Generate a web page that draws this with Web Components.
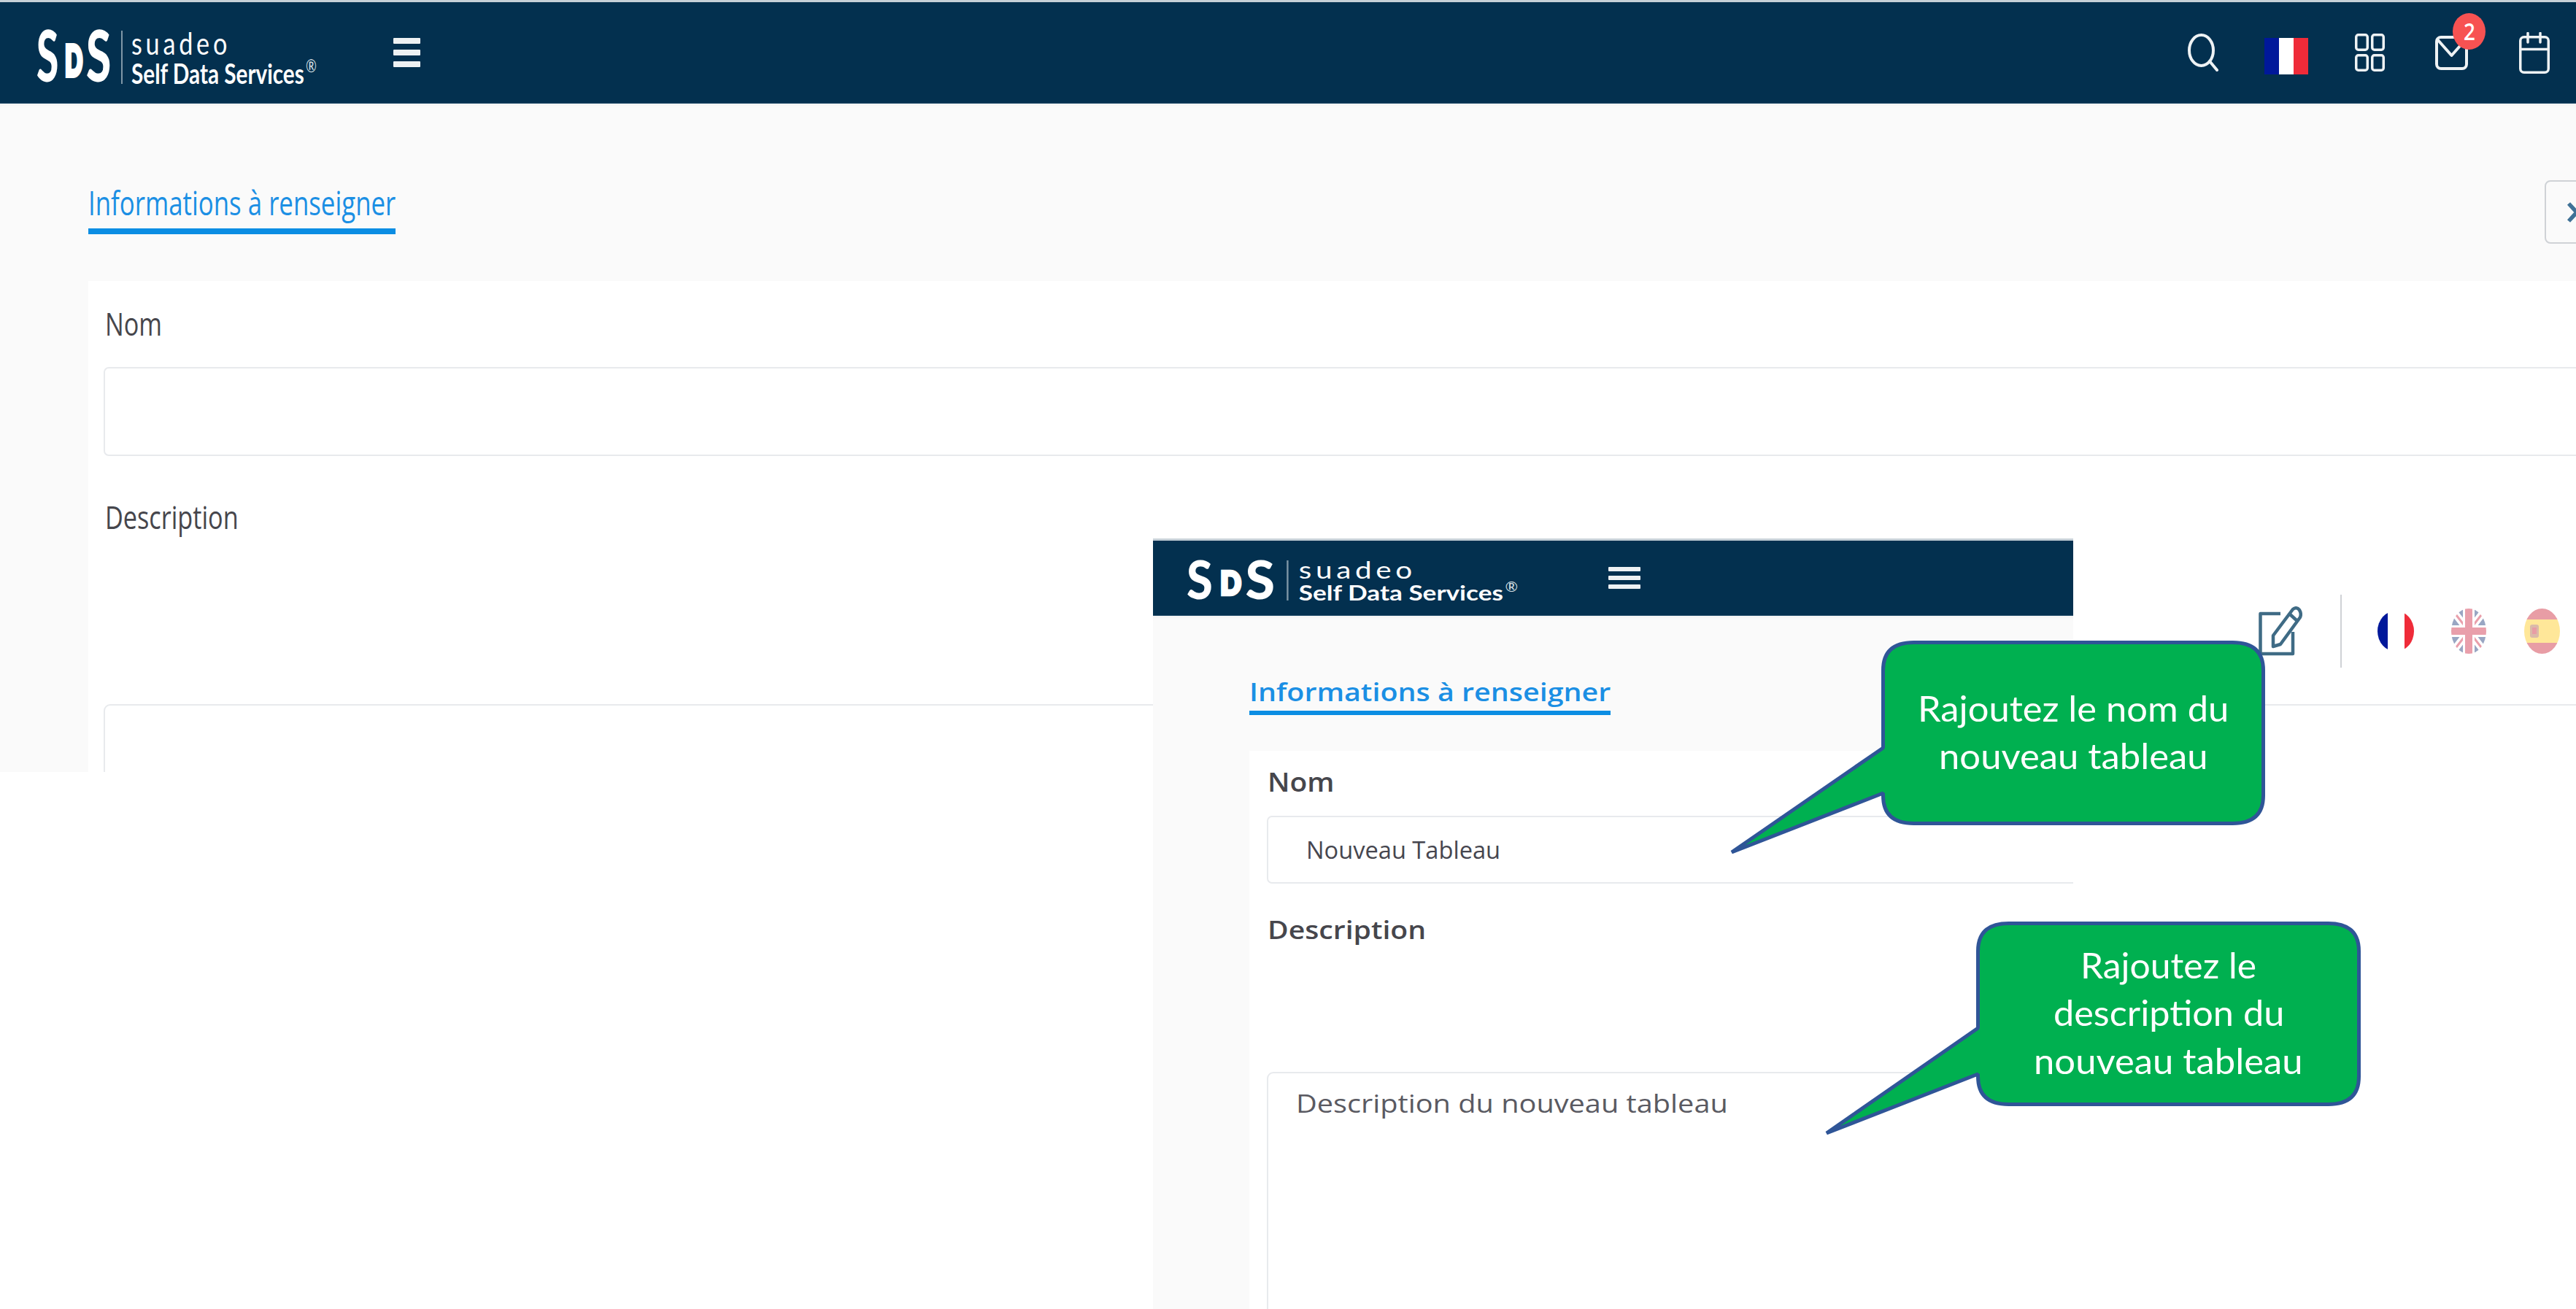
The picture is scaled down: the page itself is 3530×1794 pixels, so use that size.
<!DOCTYPE html>
<html lang="fr">
<head>
<meta charset="utf-8">
<title>SDS</title>
<style>
html,body{margin:0;padding:0;background:#fff}
body{width:3530px;height:1794px;overflow:hidden;position:relative;font-family:"Open Sans","Liberation Sans",sans-serif}
.base{width:3530px;height:1058px;--main-pl:121px;
  --title-fs:45px;--title-w:400;--title-pb:13px;--title-bar:8px;
  --label-fs:43px;--label-w:400;--label-ml:2px;
  --field-ml:21px;--card-pt:37px;--text-fs:32px}
.over{position:absolute;left:1580px;top:738px;width:1261px;height:1056px;--main-pl:132px;
  --title-fs:34px;--title-w:600;--title-pb:9px;--title-bar:6px;
  --label-fs:36px;--label-w:600;--label-ml:1px;
  --field-ml:24px;--card-pt:25px;--text-fs:32px}
.base sds-header{height:142px;padding:0 36px 0 50px}
.over sds-header{height:106px;padding:0 0 0 46px}
.base sds-logo{margin-top:12px}
.over sds-logo{margin-top:6px}
.base sds-burger{margin-left:102px;width:37px;--bar:8.5px;--gap:7.5px}
.over sds-burger{margin-left:120px;width:44px;--bar:6px;--gap:6px}
.acts{margin-left:auto;display:flex;align-items:center}
.base sds-head{padding-top:105px;height:87px}
.over sds-head{padding-top:87px;height:49px}
.base sds-title{margin-top:8px}
.base sds-card{margin-top:51px}
.over sds-card{margin-top:49px}
.base sds-input{margin-top:38px;height:122px}
.over sds-input{margin-top:28px;height:93px}
.base .desc{margin-top:62px}
.over .desc{margin-top:45px;--label-fs:35px}
.base sds-toolbar{margin-top:85px}
.base sds-textarea{margin-top:50px;height:400px}
.over sds-textarea{margin-top:178px;height:600px;font-size:35px;padding-top:23px;padding-left:38px}
</style>
</head>
<body>
<sds-window class="base">
  <sds-header slot="header">
    <sds-logo sx="1" sy="1"></sds-logo>
    <sds-burger></sds-burger>
    <div class="acts" slot="actions">
      <sds-icon name="search"></sds-icon>
      <sds-icon name="flag" style="margin:9px 0 0 63px"></sds-icon>
      <sds-icon name="grid" style="margin-left:64px"></sds-icon>
      <sds-icon name="mail" style="margin-left:69px"><sds-badge>2</sds-badge></sds-icon>
      <sds-icon name="calendar" style="margin-left:70px"></sds-icon>
    </div>
  </sds-header>
  <sds-head>
    <sds-title><fit-text w="421">Informations à renseigner</fit-text></sds-title>
    <sds-close></sds-close>
  </sds-head>
  <sds-card>
    <sds-label><fit-text w="78">Nom</fit-text></sds-label>
    <sds-input></sds-input>
    <sds-label class="desc"><fit-text w="183">Description</fit-text></sds-label>
    <sds-toolbar>
      <sds-icon name="edit"></sds-icon>
      <sds-icon name="vr" style="margin-left:52px"></sds-icon>
      <sds-icon name="fr" style="margin-left:49px"></sds-icon>
      <sds-icon name="uk" style="margin-left:51px"></sds-icon>
      <sds-icon name="es" style="margin-left:52px"></sds-icon>
    </sds-toolbar>
    <sds-textarea></sds-textarea>
  </sds-card>
</sds-window>

<sds-window class="over">
  <sds-header slot="header">
    <sds-logo sx="1.183" sy="0.753"></sds-logo>
    <sds-burger></sds-burger>
  </sds-header>
  <sds-head>
    <sds-title><fit-text w="495">Informations à renseigner</fit-text></sds-title>
  </sds-head>
  <sds-card>
    <sds-label><fit-text w="92">Nom</fit-text></sds-label>
    <sds-input><fit-text w="266">Nouveau Tableau</fit-text></sds-input>
    <sds-label class="desc"><fit-text w="217">Description</fit-text></sds-label>
    <sds-textarea><fit-text w="592">Description du nouveau tableau</fit-text></sds-textarea>
  </sds-card>
</sds-window>

<sds-callout x="2578" y="878" w="526" h="253" ax="2373" ay="1168" t1="1025" t2="1087">
  <fit-text w="426">Rajoutez le nom du</fit-text>
  <fit-text w="369">nouveau tableau</fit-text>
</sds-callout>
<sds-callout x="2708" y="1263" w="527" h="253" ax="2503" ay="1553" t1="1409" t2="1472">
  <fit-text w="241">Rajoutez le</fit-text>
  <fit-text w="316">description du</fit-text>
  <fit-text w="369">nouveau tableau</fit-text>
</sds-callout>

<script>
const def=(name,html,extra)=>{
  customElements.define(name,class extends HTMLElement{
    constructor(){super();this.attachShadow({mode:'open'}).innerHTML=html;}
    connectedCallback(){extra&&extra(this);}
  });
};

def('sds-window',`<style>:host{display:flex;flex-direction:column;overflow:hidden;background:#fff}
  main{flex:1;min-height:0;background:#fafafa;overflow:hidden;padding-left:var(--main-pl);box-shadow:inset 0 6px 6px -5px rgba(0,0,0,.05)}</style>
  <slot name="header"></slot><main><slot></slot></main>`);

def('sds-header',`<style>:host{display:flex;align-items:center;box-sizing:border-box;background:#03304f;border-top:3px solid #c6d0d7;border-bottom:1px solid #1d4a68;flex:none}</style><slot></slot><slot name="actions"></slot>`);

def('sds-logo',`<style>
  :host{display:block;flex:none}
  .box{width:387px;height:73px;display:flex;transform-origin:0 0;color:#fff;font-family:Lato,"Open Sans",sans-serif;line-height:1}
  .mk{font-weight:900;font-size:97px;margin-top:-16px;flex:none}
  .d{font-size:58px;font-weight:900;margin:11px 0 0 9px;-webkit-text-stroke:6px #fff;flex:none}
  .rule{width:2px;height:73px;background:#7f97a7;margin:0 12px 0 14px;flex:none}
  .txt{flex:none}
  .su{font-size:43px;font-weight:400;letter-spacing:6px;margin-top:-5px}
  .row{display:flex;margin-top:1px;align-items:flex-start}
  .self{font-size:38px;font-weight:700}
  .reg{font-size:25px;margin:-4px 0 0 2px;font-weight:400;color:#d9e1e6}
  </style>
  <div class="box">
    <div class="mk"><fit-text w="30">S</fit-text></div>
    <div class="d"><fit-text w="24">D</fit-text></div>
    <div class="mk" style="margin-left:5px"><fit-text w="34">S</fit-text></div>
    <div class="rule"></div>
    <div class="txt">
      <div class="su"><fit-text w="136">suadeo</fit-text></div>
      <div class="row"><div class="self"><fit-text w="237">Self Data Services</fit-text></div><div class="reg"><fit-text w="15">®</fit-text></div></div>
    </div>
  </div>`,el=>{
  const sx=+el.getAttribute('sx'),sy=+el.getAttribute('sy');
  el.style.width=387*sx+'px';el.style.height=73*sy+'px';
  el.shadowRoot.querySelector('.box').style.transform=`scale(${sx},${sy})`;
});

def('sds-burger',`<style>:host{display:flex;flex-direction:column;gap:var(--gap);flex:none}
  i{display:block;height:var(--bar);background:#eef1f3;border-radius:1px}</style><i></i><i></i><i></i>`);

const ICONS={
 search:[42,52,`<g fill="none" stroke="#eef2f4" stroke-width="4" stroke-linecap="round"><ellipse cx="18.5" cy="23" rx="16.5" ry="21"/><path d="M30 38 40 50"/></g>`],
 flag:[60,50,`<rect width="20" height="50" fill="#00189a"/><rect x="20" width="20" height="50" fill="#fff"/><rect x="40" width="20" height="50" fill="#ef2b39"/>`],
 grid:[41,52,`<g fill="none" stroke="#eef2f4" stroke-width="3.5"><rect x="1.75" y="1.75" width="15.5" height="20.5" rx="3"/><rect x="23.75" y="1.75" width="15.5" height="20.5" rx="3"/><rect x="1.75" y="29.75" width="15.5" height="20.5" rx="3"/><rect x="23.75" y="29.75" width="15.5" height="20.5" rx="3"/></g>`],
 mail:[45,47,`<g fill="none" stroke="#eef2f4" stroke-width="4" stroke-linecap="round" stroke-linejoin="round"><rect x="2" y="2" width="41" height="43" rx="6"/><path d="M3 5 22.500 27 42 5"/></g>`],
 calendar:[42,57,`<g fill="none" stroke="#eef2f4" stroke-width="3.500" stroke-linecap="round"><rect x="1.750" y="6.750" width="38.500" height="48.500" rx="5"/><path d="M1.750 23.500H40.250M12 1.500V14M29 1.500V14"/></g>`],
 edit:[60,68,`<g fill="none" stroke="#3f6b85" stroke-width="4.500" stroke-linejoin="round"><path d="M30 10H2.500V65H47V35"/><path d="M20 55V40L47 4Q52 0 56 5 59 10 57 15L30 52Z"/><path d="M42 10 53 20"/></g>`],
 vr:[2,100,`<rect width="2" height="100" fill="#cfd2d6"/>`],
 fr:[50,56,`<defs><clipPath id="c"><ellipse cx="25" cy="28" rx="25" ry="28"/></clipPath></defs><g clip-path="url(#c)"><rect width="14" height="56" fill="#00189a"/><rect x="37" width="13" height="56" fill="#ef2b39"/></g>`],
 uk:[48,62,`<defs><clipPath id="c"><ellipse cx="24" cy="31" rx="24" ry="31"/></clipPath></defs><g clip-path="url(#c)" opacity=".4"><rect width="48" height="62" fill="#012169"/><path d="M0 0 48 62M48 0 0 62" stroke="#fff" stroke-width="10"/><path d="M0 0 48 62M48 0 0 62" stroke="#c8102e" stroke-width="3"/><path d="M24 0V62M0 31H48" stroke="#fff" stroke-width="16"/><path d="M24 0V62M0 31H48" stroke="#c8102e" stroke-width="10"/></g>`],
 es:[49,62,`<defs><clipPath id="c"><ellipse cx="24.500" cy="31" rx="24.500" ry="31"/></clipPath></defs><g clip-path="url(#c)" opacity=".4"><rect width="49" height="62" fill="#c60b1e"/><rect y="15" width="49" height="32" fill="#ffc400"/><rect x="8" y="22" width="12" height="18" rx="3" fill="#a5532a"/><rect x="11" y="26" width="6" height="9" fill="#c60b1e"/></g>`]
};
def('sds-icon',`<style>:host{display:block;position:relative;flex:none}svg{display:block;width:100%;height:100%}</style><div id="s" style="height:100%"></div><slot></slot>`,el=>{
  const [w,h,body]=ICONS[el.getAttribute('name')];
  el.style.width=w+'px';el.style.height=h+'px';
  el.shadowRoot.getElementById('s').innerHTML=`<svg viewBox="0 0 ${w} ${h}">${body}</svg>`;
});

def('sds-badge',`<style>:host{position:absolute;left:24px;top:-31px;width:45px;height:50px;border-radius:50%;background:#f75252;color:#fff;display:flex;align-items:center;justify-content:center;font-family:"Open Sans",sans-serif;font-weight:600;font-size:33px;line-height:1}
  </style><fit-text id="f" w="16"><slot></slot></fit-text>`);

def('sds-head',`<style>:host{display:flex;justify-content:space-between;align-items:flex-start}</style><slot></slot>`);
def('sds-title',`<style>:host{display:block;flex:none;font-size:var(--title-fs);font-weight:var(--title-w);line-height:1;color:#1b8fe4;padding-bottom:var(--title-pb);border-bottom:var(--title-bar) solid #0b8de3}</style><slot></slot>`);
def('sds-close',`<style>:host{display:flex;align-items:center;justify-content:center;flex:none;box-sizing:border-box;width:87px;height:87px;margin-right:-44px;border:2px solid #cfd2d6;border-radius:8px;background:#fafafa}</style>
  <svg width="28" height="28" viewBox="0 0 28 28"><path d="M3 2 25 26M25 2 3 26" stroke="#3f7196" stroke-width="5.500" fill="none"/></svg>`);
def('sds-card',`<style>:host{display:block;background:#fff;padding-top:var(--card-pt);height:2000px}</style><slot></slot>`);
def('sds-label',`<style>:host{display:block;font-size:var(--label-fs);font-weight:var(--label-w);line-height:1;color:#46464c;margin-left:calc(var(--field-ml) + var(--label-ml))}</style><slot></slot>`);
def('sds-input',`<style>:host{display:flex;align-items:center;box-sizing:border-box;margin-left:var(--field-ml);margin-right:-30px;border:2px solid #e8eaed;border-radius:7px;background:#fff;padding-left:52px;font-size:var(--text-fs);line-height:1;color:#46464f}</style><slot></slot>`);
def('sds-textarea',`<style>:host{display:block;box-sizing:border-box;margin-left:var(--field-ml);margin-right:-30px;border:2px solid #e8eaed;border-radius:9px;background:#fff;line-height:1;color:#5a5a62}</style><slot></slot>`);
def('sds-toolbar',`<style>:host{display:flex;justify-content:flex-end;align-items:center;height:100px;padding-right:22px}</style><slot></slot>`);

def('sds-callout',`<style>:host{position:absolute;display:block}
  svg{position:absolute;left:0;top:0;overflow:visible}
  .t{position:absolute;top:0;display:flex;flex-direction:column;align-items:center;justify-content:center;box-sizing:border-box;padding-bottom:3px;color:#fff;font:400 49px/65.500px Lato,"Open Sans",sans-serif}
  </style><svg></svg><div class="t"><slot></slot></div>`,el=>{
  const g=n=>+el.getAttribute(n),x=g('x'),y=g('y'),w=g('w'),h=g('h'),ax=g('ax'),ay=g('ay'),t1=g('t1'),t2=g('t2');
  const L=ax-8,T=y,sw=5,k=sw/2,rx=42,ry=38;
  el.style.cssText=`left:${L}px;top:${T}px;width:${x+w-L}px;height:${Math.max(h,ay-y+8)}px`;
  const X=x-L+k,Y=k,R=x+w-L-k,B=h-k,aX=ax-L,aY=ay-T,y1=t1-T,y2=t2-T;
  const d=`M${X+rx} ${Y}H${R-rx}Q${R} ${Y} ${R} ${Y+ry}V${B-ry}Q${R} ${B} ${R-rx} ${B}H${X+rx}Q${X} ${B} ${X} ${B-ry}V${y2}L${aX} ${aY}L${X} ${y1}V${Y+ry}Q${X} ${Y} ${X+rx} ${Y}Z`;
  const s=el.shadowRoot.querySelector('svg');
  s.setAttribute('width',x+w-L);s.setAttribute('height',Math.max(h,ay-y+8));
  s.innerHTML=`<path d="${d}" fill="#00b050" stroke="#2f5597" stroke-width="${sw}" stroke-linejoin="bevel"/>`;
  const t=el.shadowRoot.querySelector('.t');
  t.style.left=(x-L)+'px';t.style.width=w+'px';t.style.height=h+'px';
});

/* text whose drawn width is fitted to a measured width: defined last, so the
   elements around it already pass their fonts down when it measures */
def('fit-text',`<style>:host{display:block;white-space:nowrap}
  span{display:inline-block;transform-origin:0 50%}</style><span><slot></slot></span>`,el=>{
  const w=+el.getAttribute('w'),s=el.shadowRoot.querySelector('span');
  s.style.transform=`scaleX(${w/s.offsetWidth})`;
  el.style.width=w+'px';
});
</script>
</body>
</html>
